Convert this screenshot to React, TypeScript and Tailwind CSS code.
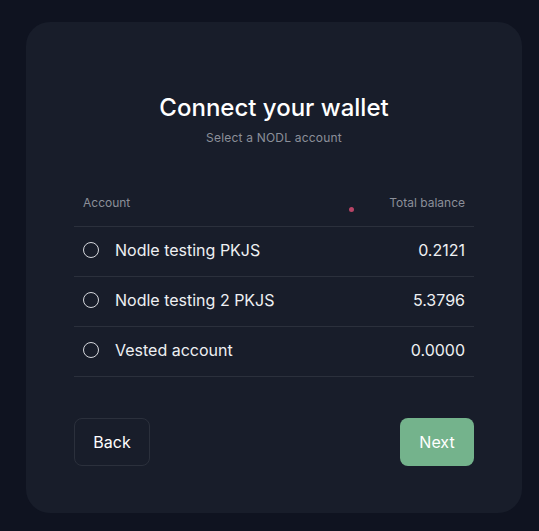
const accounts = [
  { name: "Nodle testing PKJS", balance: "0.2121" },
  { name: "Nodle testing 2 PKJS", balance: "5.3796" },
  { name: "Vested account", balance: "0.0000" },
];

export default function App() {
  return (
    <div
      className="min-h-[531px] w-full bg-[#0f1320] pt-[22px] pr-[17px] pb-[18px] pl-[26px] text-white"
      style={{ fontFamily: "Inter, 'Noto Sans', sans-serif" }}
    >
      <div className="flex h-[491px] flex-col rounded-3xl bg-[#181d2a] px-12 pt-[70px]">
        <div className="text-center">
          <h1 className="text-2xl leading-8 font-medium">Connect your wallet</h1>
          <p className="mt-[6px] text-xs leading-4 tracking-[0.2px] text-[#8b8f99]">Select a NODL account</p>
        </div>

        <div className="relative mt-[32px]">
          <span className="absolute top-[29px] left-[275px] h-[5px] w-[5px] rounded-full bg-[#b84466]" />
          <table className="w-full text-left">
            <thead className="border-b border-[#2b303c]">
              <tr className="h-12 text-xs text-[#8b8f99]">
                <th className="pt-[3px] pl-[9px] font-normal">Account</th>
                <th className="pt-[3px] pr-[9px] text-right font-normal">Total balance</th>
              </tr>
            </thead>
            <tbody>
              {accounts.map((a) => (
                <tr key={a.name} className="h-[50px] border-b border-[#2b303c]">
                  <td className="pb-[2px] pl-[9px]">
                    <div className="flex items-center gap-4">
                      <span className="h-4 w-4 rounded-full border border-[#d5d7dc]" />
                      <span className="text-base text-[#eef0f3]">{a.name}</span>
                    </div>
                  </td>
                  <td className="pr-[9px] pb-[2px] text-right text-base text-[#eef0f3]">{a.balance}</td>
                </tr>
              ))}
            </tbody>
          </table>
        </div>

        <div className="mt-[41px] flex items-center justify-between">
          <button className="h-12 w-[76px] rounded-lg border border-[#2b303c] text-base">Back</button>
          <button className="h-12 w-[74px] rounded-lg bg-[#74b38c] text-base">Next</button>
        </div>
      </div>
    </div>
  );
}
